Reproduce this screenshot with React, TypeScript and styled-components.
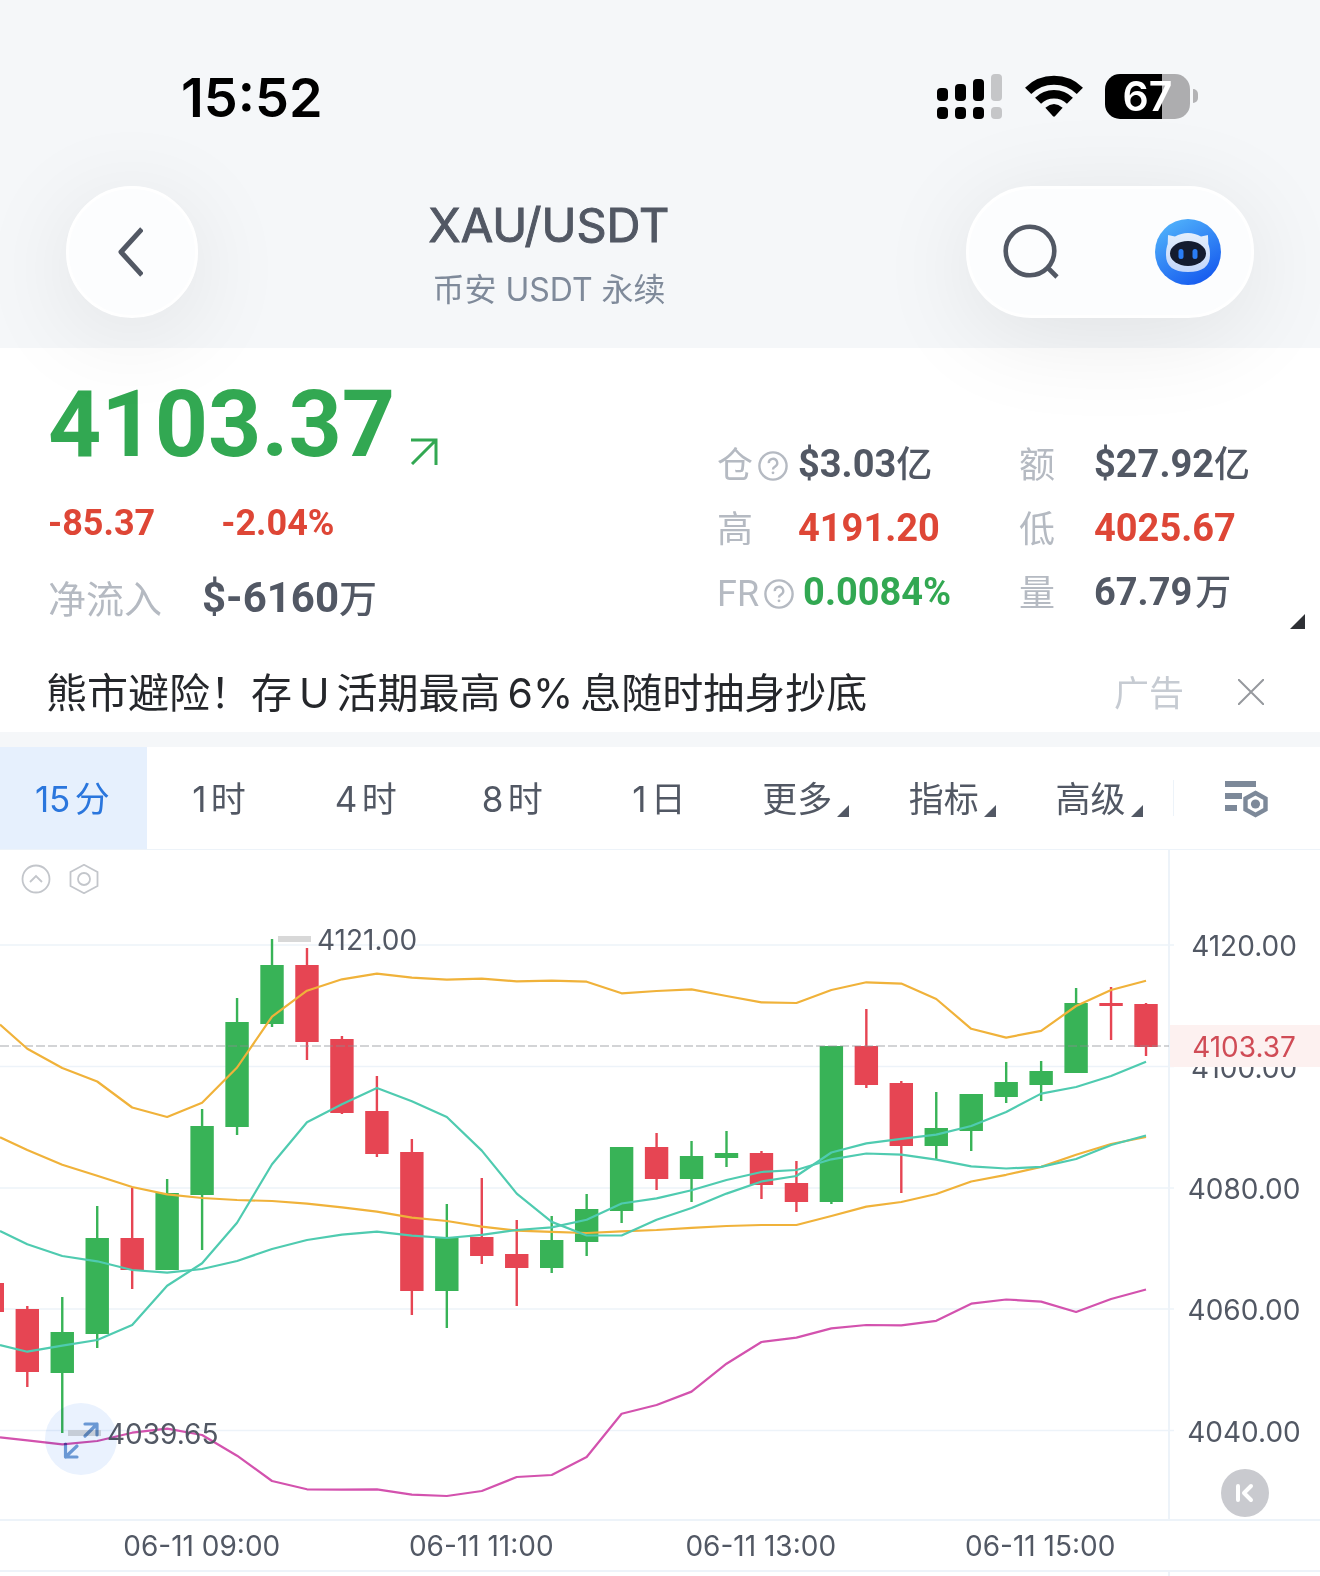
import React from "react";
import styled, { createGlobalStyle } from "styled-components";

const sans = `Inter, "Noto Sans CJK SC", sans-serif`;
const numeric = `Roboto, "Noto Sans CJK SC", sans-serif`;

const color = {
  ink: "#525864",
  muted: "#b5bac2",
  up: "#32a852",
  down: "#de4636",
  band: "#f5f7f9",
  line: "#edf3f9",
  candleUp: "#38b357",
  candleDown: "#e64553",
};

const GlobalStyle = createGlobalStyle`
  * { box-sizing: border-box; }
  body { margin: 0; background: #fff; font-family: ${sans}; color: ${color.ink}; }
  button { border: 0; padding: 0; background: none; font: inherit; color: inherit; cursor: pointer; }
  svg { display: block; }
  h1, p, dl, dd, dt { margin: 0; font-weight: inherit; }
`;

const Page = styled.main`
  width: 100%;
  overflow-x: hidden;
`;

/* ---------- header ---------- */

const Header = styled.header`
  position: relative;
  z-index: 1;
  background: ${color.band};
  padding: 66px 66px 30px;
`;

const StatusBar = styled.div`
  display: flex;
  align-items: center;
  justify-content: space-between;
  height: 62px;
  padding: 0 56px 0 115px;
  color: #000;
`;

const Clock = styled.time`
  padding-top: 2px;
  font-size: 54px;
  font-weight: 600;
  line-height: 62px;
`;

const StatusIcons = styled.div`
  display: flex;
  align-items: center;
  gap: 22px;
  padding-bottom: 2px;
`;

const BatteryWrap = styled.div`
  display: flex;
  align-items: center;
  gap: 3px;
`;

const BatteryBody = styled.div`
  width: 85px;
  height: 45px;
  border-radius: 15px;
  background: linear-gradient(to right, #000 67%, #adadaf 67%);
  color: #fff;
  font-size: 41px;
  font-weight: 600;
  line-height: 45px;
  text-align: center;
`;

const BatteryCap = styled.div`
  width: 5px;
  height: 14px;
  border-radius: 0 5px 5px 0;
  background: #b3b3b5;
`;

const TitleBar = styled.div`
  display: flex;
  align-items: center;
  justify-content: space-between;
  margin-top: 58px;
`;

const glass = `
  height: 132px;
  border-radius: 66px;
  border: 3px solid #fff;
  background: #fcfdfe;
  box-shadow: 0 16px 100px rgba(0, 0, 0, 0.09);
`;

const BackButton = styled.button`
  ${glass}
  width: 132px;
  display: grid;
  place-items: center;
  padding-right: 4px;
`;

const Actions = styled.div`
  ${glass}
  width: 288px;
  display: flex;
  align-items: center;
  justify-content: space-between;
  padding: 0 30px 0 34px;
`;

const TitleBlock = styled.div`
  flex: 1;
  display: flex;
  flex-direction: column;
  align-items: center;
  padding-right: 66px;
`;

const Pair = styled.h1`
  font-size: 47px;
  font-weight: 400;
  line-height: 60px;
  -webkit-text-stroke: 1px currentColor;
`;

const Venue = styled.p`
  margin-top: 15px;
  font-size: 32px;
  line-height: 40px;
  color: #7f8a9a;
`;

/* ---------- quote ---------- */

const Quote = styled.section`
  position: relative;
  display: flex;
  justify-content: space-between;
  height: 304px;
  padding-left: 48px;
  font-family: ${numeric};
`;

const Headline = styled.div`
  padding-top: 37px;
`;

const PriceRow = styled.div`
  display: flex;
  align-items: flex-end;
  gap: 15px;
  color: ${color.up};
`;

const Price = styled.p`
  font-size: 93px;
  font-weight: 700;
  line-height: 80px;
`;

const ChangeRow = styled.div`
  display: flex;
  gap: 66px;
  margin-top: 38px;
  font-size: 36px;
  font-weight: 700;
  line-height: 40px;
  color: ${color.down};
`;

const FlowRow = styled.div`
  display: flex;
  align-items: center;
  gap: 40px;
  margin-top: 30px;
  line-height: 48px;
`;

const FlowLabel = styled.span`
  padding-top: 3px;
  font-size: 38px;
  color: ${color.muted};
`;

const FlowValue = styled.span`
  font-size: 42px;
  font-weight: 700;
`;

const Unit = styled.span`
  font-weight: 500;
`;

const FlowUnit = styled(Unit)`
  font-size: 38px;
`;

const Stats = styled.dl`
  display: grid;
  grid-template-columns: 302px 301px;
  grid-auto-rows: 64px;
  padding-top: 84px;
`;

const Stat = styled.div`
  display: flex;
  align-items: center;
`;

const StatLabel = styled.dt<{ $width: number }>`
  display: flex;
  align-items: center;
  gap: 5px;
  flex: none;
  min-width: ${(p) => p.$width}px;
  padding: 4px 9px 0 0;
  font-size: 36px;
  line-height: 40px;
  color: ${color.muted};
`;

const StatValue = styled.dd<{ $tone: string; $spaced?: boolean }>`
  font-size: 38px;
  font-weight: 700;
  line-height: 44px;
  white-space: nowrap;
  color: ${(p) => p.$tone};

  ${Unit} {
    font-size: 36px;
    margin-left: ${(p) => (p.$spaced ? 3 : 0)}px;
  }
`;

const ExpandQuote = styled.button`
  position: absolute;
  right: 15px;
  bottom: 23px;
`;

/* ---------- ad ---------- */

const AdBar = styled.aside`
  display: flex;
  align-items: center;
  height: 80px;
  padding: 0 56px 0 46px;
`;

const AdLink = styled.a`
  flex: 1;
  padding-top: 2px;
  font-size: 41px;
  line-height: 48px;
  color: #25272b;
  text-decoration: none;
`;

const Latin = styled.span`
  padding: 0 7px;
`;

const AdTag = styled.span`
  margin-right: 54px;
  padding-top: 2px;
  font-size: 35px;
  line-height: 40px;
  color: #c6cbd2;
`;

/* ---------- tabs ---------- */

const Tabs = styled.nav`
  display: grid;
  grid-template-columns: repeat(9, 1fr);
  height: 118px;
  border-top: 15px solid ${color.band};
  border-bottom: 1px solid ${color.line};
`;

const Tab = styled.button<{ $active?: boolean }>`
  display: flex;
  align-items: center;
  justify-content: center;
  gap: 5px;
  padding: 2px 2px 0 0;
  font-size: 35px;
  line-height: 48px;
  white-space: nowrap;
  text-autospace: normal;
  color: ${(p) => (p.$active ? "#2a76dd" : color.ink)};
  background: ${(p) => (p.$active ? "#e6f0fd" : "transparent")};

  svg {
    margin-top: 24px;
  }
`;

const SettingsCell = styled.div`
  display: flex;
  align-items: center;
  justify-content: space-between;
  padding-right: 52px;

  &::before {
    content: "";
    width: 1px;
    height: 36px;
    background: ${color.line};
  }
`;

/* ---------- chart ---------- */

const ChartPane = styled.section`
  position: relative;
  border-bottom: 2px solid ${color.line};
`;

const Plot = styled.svg`
  width: 100%;
  height: auto;
  font-family: ${sans};
  font-size: 28px;
`;

const PaneTools = styled.div`
  position: absolute;
  left: 21px;
  top: 14px;
  display: flex;
  gap: 18px;
`;

const FullscreenButton = styled.button`
  position: absolute;
  left: 45px;
  bottom: 44px;
  width: 72px;
  height: 72px;
  border-radius: 50%;
  background: #eaf2fe;
  mix-blend-mode: multiply;
`;

const LatestButton = styled.button`
  position: absolute;
  right: 51px;
  bottom: 2px;
  width: 48px;
  height: 48px;
  border-radius: 50%;
  background: #c9cacf;
`;

const TimeAxis = styled.div`
  display: grid;
  grid-template-columns: repeat(4, 1fr);
  padding: 1px 140px 0 62px;
  border-bottom: 2px solid ${color.line};
  font-size: 28px;
  line-height: 48px;
  text-align: center;
`;

const NextPane = styled.div`
  height: 5px;
  margin-right: 150px;
  border-right: 2px solid ${color.line};
`;

/* ---------- data ---------- */

const START = 27.3;
const STEP = 34.96;
const TOP = 850;
const px = (i: number) => START + STEP * i;

type Candle = [up: 0 | 1, high: number, bodyTop: number, bodyBottom: number, low: number];

const candles: Candle[] = [
  [0, 1306, 1309, 1372, 1387], [1, 1297, 1332, 1373, 1433], [1, 1206, 1238, 1334, 1348],
  [0, 1188, 1238, 1270, 1289], [1, 1179, 1193, 1270, 1270], [1, 1109, 1126, 1195, 1250],
  [1, 998, 1022, 1127, 1135], [1, 939, 965, 1024, 1027], [0, 948, 965, 1042, 1060],
  [0, 1036, 1039, 1113, 1114], [0, 1076, 1111, 1154, 1157], [0, 1139, 1152, 1291, 1315],
  [1, 1204, 1238, 1291, 1328], [0, 1178, 1237, 1256, 1264], [0, 1220, 1254, 1268, 1306],
  [1, 1216, 1240, 1268, 1273], [1, 1194, 1209, 1242, 1256], [1, 1147, 1147, 1211, 1223],
  [0, 1133, 1147, 1179, 1190], [1, 1141, 1156, 1179, 1202], [1, 1131, 1153, 1158, 1167],
  [0, 1151, 1153, 1185, 1199], [0, 1161, 1183, 1202, 1212], [1, 1046, 1046, 1202, 1204],
  [0, 1009, 1046, 1085, 1088], [0, 1081, 1083, 1146, 1193], [1, 1092, 1128, 1146, 1159],
  [1, 1094, 1094, 1131, 1151], [1, 1062, 1082, 1097, 1103], [1, 1061, 1071, 1085, 1101],
  [1, 988, 1003, 1073, 1073], [0, 987, 1003, 1006, 1040], [0, 1003, 1004, 1047, 1056],
];

// First value is where the curve meets the left edge, the rest follow the candles.
const curves: { stroke: string; values: number[] }[] = [
  {
    stroke: "#f0b23a",
    values: [1024.5, 1048.7, 1068, 1081.5, 1107.5, 1117, 1102.7, 1067.5, 1016.7, 990.7, 979.3, 973.7, 977.7, 979.7, 978.7, 981.3, 980.7, 981.7, 993.3, 991, 989.3, 996, 1002.3, 1003, 990, 982.3, 983.6, 999, 1028.8, 1037.6, 1030.9, 1006, 990, 980.7],
  },
  {
    stroke: "#f0b23a",
    values: [1137.3, 1150, 1164.7, 1175.7, 1187, 1194.3, 1198, 1200, 1201, 1203.7, 1207.3, 1211.7, 1217.7, 1221, 1226.7, 1230.7, 1231.8, 1233, 1231.4, 1230, 1227.8, 1226, 1225, 1225, 1216, 1206.6, 1202, 1194, 1181.5, 1174.8, 1166.9, 1154.7, 1144, 1137],
  },
  {
    stroke: "#4fcbb0",
    values: [1345, 1351.7, 1345.7, 1340, 1325, 1285.7, 1263.3, 1222.7, 1164.3, 1122.3, 1104.3, 1088, 1101.3, 1117, 1150.6, 1193.6, 1221.9, 1235.5, 1235.5, 1219.7, 1208, 1193.6, 1181.5, 1176, 1152.5, 1143.4, 1138.8, 1134.6, 1126, 1112, 1093.6, 1087, 1076, 1061.8],
  },
  {
    stroke: "#4fcbb0",
    values: [1231, 1244.3, 1256, 1261.3, 1270, 1272.7, 1269, 1261, 1249, 1240, 1234.7, 1231.7, 1235.7, 1238, 1234.8, 1230, 1227.4, 1219.7, 1203.5, 1198.4, 1190.3, 1180, 1172, 1170, 1159.3, 1153.5, 1154.7, 1159.7, 1166.4, 1168.5, 1166.9, 1159, 1145, 1135.5],
  },
  {
    stroke: "#d352ae",
    values: [1437.3, 1440.3, 1444.3, 1441, 1432.7, 1428.7, 1435, 1455.7, 1481, 1489.3, 1489.7, 1489.3, 1494.7, 1496, 1491, 1477, 1475, 1457, 1413.7, 1405, 1391.6, 1363.7, 1342, 1337.6, 1328.4, 1325, 1325.4, 1320.8, 1303.7, 1299.5, 1301.6, 1312, 1299, 1289.5],
  },
];

const gridLevels = [
  { y: 945, label: "4120.00" },
  { y: 1066.500, label: "4100.00" },
  { y: 1188, label: "4080.00" },
  { y: 1309, label: "4060.00" },
  { y: 1430.500, label: "4040.00" },
];

/* ---------- icons ---------- */

const Signal = () => (
  <svg width="66" height="45" viewBox="0 0 66 45" aria-label="signal">
    {[14, 10, 5, 0].map((y, i) => (
      <g key={i} fill={i === 3 ? "#c5c6c8" : "#000"}>
        <rect x={i * 18} y={y} width="11" height={27 - y} rx="4" />
        <rect x={i * 18} y="33" width="11" height="12" rx="4" />
      </g>
    ))}
  </svg>
);

const Wifi = () => (
  <svg width="58" height="43" viewBox="-29.5 -42 59 43" aria-label="wi-fi">
    <g fill="none" stroke="#000">
      <path d="M-26.3 -26.3A37.6 37.6 0 0 1 26.3 -26.3" strokeWidth="9" />
      <path d="M-16.2 -16.2A23 23 0 0 1 16.2 -16.2" strokeWidth="8.6" />
    </g>
    <path d="M-8.8 -9Q0 -16.5 8.8 -9L1 -0.4Q0 0.6 -1 -0.4Z" />
  </svg>
);

const Robot = () => (
  <svg width="66" height="66" viewBox="0 0 66 66">
    <defs>
      <linearGradient id="robotBg" x1="0.2" y1="0" x2="0.8" y2="1">
        <stop offset="0" stopColor="#51b3fb" />
        <stop offset="1" stopColor="#1356ee" />
      </linearGradient>
      <linearGradient id="robotHead" x1="0" y1="0" x2="0" y2="1">
        <stop offset="0" stopColor="#e3eefc" />
        <stop offset="1" stopColor="#c3d6fa" />
      </linearGradient>
    </defs>
    <circle cx="33" cy="33" r="33" fill="url(#robotBg)" />
    <path
      d="M13 16.5Q13 15.8 14 16.2L20 17.6Q26 14 33 14T46 17.6L52 16.2Q53 15.8 53 16.5L53.3 25Q55 29 55 36Q55 53 33 53T11 36Q11 29 12.700 25Z"
      fill="url(#robotHead)"
    />
    <ellipse cx="33" cy="34.500" rx="18" ry="12.500" fill="#141c30" />
    <rect x="23.500" y="30" width="5" height="10" rx="2.500" fill="#2a7df5" />
    <rect x="37.500" y="30" width="5" height="10" rx="2.500" fill="#2a7df5" />
  </svg>
);

const Help = () => (
  <svg width="30" height="30" viewBox="0 0 30 30" fill="none" stroke={color.muted} strokeWidth="2.400">
    <circle cx="15" cy="15" r="13.600" />
    <path d="M10.800 12.200A4.200 4.200 0 1 1 17 15.600Q15 16.600 15 18.400" />
    <circle cx="15" cy="21.800" r="0.800" fill={color.muted} strokeWidth="1.200" />
  </svg>
);

const Corner = ({ size, fill }: { size: number; fill: string }) => (
  <svg width={size} height={size} viewBox="0 0 10 10">
    <path d="M10 0V10H0Z" fill={fill} />
  </svg>
);

/* ---------- view ---------- */

const stats = [
  { label: "仓", help: true, value: "$3.03", unit: "亿", tone: color.ink },
  { label: "额", value: "$27.92", unit: "亿", tone: color.ink },
  { label: "高", value: "4191.20", tone: color.down },
  { label: "低", value: "4025.67", tone: color.down },
  { label: "FR", help: true, value: "0.0084%", tone: color.up },
  { label: "量", value: "67.79", unit: "万", tone: color.ink, spaced: true },
];

const intervals = ["15分", "1时", "4时", "8时", "1日"];
const menus = ["更多", "指标", "高级"];
const times = ["06-11 09:00", "06-11 11:00", "06-11 13:00", "06-11 15:00"];

const CandleChart = () => (
  <Plot viewBox={`0 ${TOP} 1320 669`} role="img" aria-label="XAU/USDT 15分">
    {gridLevels.map((g) => (
      <line key={g.y} x1="0" x2="1174" y1={g.y} y2={g.y} stroke={color.line} strokeWidth="1.600" />
    ))}
    <line x1="1169" x2="1169" y1={TOP} y2="1519" stroke={color.line} strokeWidth="2" />

    <rect x="0" y="1283" width="4" height="29" fill={color.candleDown} />
    {candles.map(([up, high, top, bottom, low], i) => (
      <g key={i} fill={up ? color.candleUp : color.candleDown}>
        <rect x={px(i) - 1.2} y={high} width="2.400" height={low - high} />
        <rect x={px(i) - 11.7} y={top} width="23.400" height={bottom - top} />
      </g>
    ))}
    <line x1="0" x2="1169" y1="1046" y2="1046" stroke="#8a8d94" strokeOpacity="0.5" strokeWidth="1.600" strokeDasharray="9 3" />
    {curves.map((c, n) => (
      <polyline
        key={n}
        fill="none"
        stroke={c.stroke}
        strokeWidth="2.200"
        strokeLinejoin="round"
        points={c.values.map((y, i) => `${i === 0 ? 0 : px(i - 1)},${y}`).join(" ")}
      />
    ))}

    <rect x="278" y="936" width="33" height="6" fill="#d8d8d8" />
    <text x="317" y="950" fill={color.ink}>4121.00</text>
    <rect x="68" y="1430" width="33" height="6" fill="#d8d8d8" />
    <text x="107" y="1444" fill={color.ink}>4039.65</text>

    {gridLevels.map((g) => (
      <text key={g.label} x="1244" y={g.y + 11} textAnchor="middle" fill={color.ink}>
        {g.label}
      </text>
    ))}
    <rect x="1170" y="1025" width="150" height="42" fill="#fdf1f0" />
    <text x="1244" y="1057" textAnchor="middle" fill="#d04c56">4103.37</text>
  </Plot>
);

export default function App() {
  return (
    <Page>
      <GlobalStyle />
      <Header>
        <StatusBar>
          <Clock>15:52</Clock>
          <StatusIcons>
            <Signal />
            <Wifi />
            <BatteryWrap>
              <BatteryBody>67</BatteryBody>
              <BatteryCap />
            </BatteryWrap>
          </StatusIcons>
        </StatusBar>
        <TitleBar>
          <BackButton aria-label="返回">
            <svg width="26" height="50" viewBox="0 0 26 50" fill="none" stroke={color.ink} strokeWidth="5" strokeLinejoin="round">
              <path d="M25 2L4 25L25 48" />
            </svg>
          </BackButton>
          <TitleBlock>
            <Pair>XAU/USDT</Pair>
            <Venue>币安 USDT 永续</Venue>
          </TitleBlock>
          <Actions>
            <button aria-label="搜索">
              <svg width="56" height="56" viewBox="0 0 56 56" fill="none" stroke={color.ink} strokeWidth="4.600">
                <circle cx="27" cy="27" r="24.300" />
                <path d="M44 43L54 53" />
              </svg>
            </button>
            <button aria-label="助手">
              <Robot />
            </button>
          </Actions>
        </TitleBar>
      </Header>

      <Quote>
        <Headline>
          <PriceRow>
            <Price>4103.37</Price>
            <svg width="28" height="28" viewBox="0 0 28 28" fill="none" stroke={color.up} strokeWidth="3">
              <path d="M1 3H26V28M26 3L2 27" />
            </svg>
          </PriceRow>
          <ChangeRow>
            <span>-85.37</span>
            <span>-2.04%</span>
          </ChangeRow>
          <FlowRow>
            <FlowLabel>净流入</FlowLabel>
            <FlowValue>
              $-6160<FlowUnit>万</FlowUnit>
            </FlowValue>
          </FlowRow>
        </Headline>
        <Stats>
          {stats.map((s, i) => (
            <Stat key={s.label}>
              <StatLabel $width={i % 2 ? 75 : 81}>
                {s.label}
                {s.help && <Help />}
              </StatLabel>
              <StatValue $tone={s.tone} $spaced={s.spaced}>
                {s.value}
                {s.unit && <Unit>{s.unit}</Unit>}
              </StatValue>
            </Stat>
          ))}
        </Stats>
        <ExpandQuote aria-label="展开">
          <Corner size={15} fill="#2e3035" />
        </ExpandQuote>
      </Quote>

      <AdBar>
        <AdLink href="#">
          熊市避险！存<Latin>U</Latin>活期最高<Latin>6%</Latin>息随时抽身抄底
        </AdLink>
        <AdTag>广告</AdTag>
        <button aria-label="关闭">
          <svg width="26" height="26" viewBox="0 0 26 26" stroke="#96999e" strokeWidth="2">
            <path d="M0 0L26 26M26 0L0 26" />
          </svg>
        </button>
      </AdBar>

      <Tabs>
        {intervals.map((t, i) => (
          <Tab key={t} $active={i === 0}>
            {t}
          </Tab>
        ))}
        {menus.map((t) => (
          <Tab key={t}>
            {t}
            <Corner size={12} fill={color.ink} />
          </Tab>
        ))}
        <SettingsCell>
          <button aria-label="图表设置">
            <svg width="43" height="40" viewBox="0 0 43 40">
              <g fill="#7d8999">
                <rect x="0" y="3" width="31" height="6" />
                <rect x="0" y="15" width="17" height="6" />
                <rect x="0" y="27" width="12" height="6" />
              </g>
              <path d="M30.500 15L40.500 20.500V31.500L30.500 37L20.500 31.500V20.500Z" fill="none" stroke="#7d8999" strokeWidth="4.400" />
              <circle cx="30.500" cy="26" r="4.600" fill="#7d8999" />
            </svg>
          </button>
        </SettingsCell>
      </Tabs>

      <ChartPane>
        <CandleChart />
        <PaneTools>
          <button aria-label="收起">
            <svg width="30" height="30" viewBox="0 0 30 30" fill="none" stroke="#c3c6cb" strokeWidth="1.800">
              <circle cx="15" cy="15" r="13.500" />
              <path d="M9 18L15 12L21 18" />
            </svg>
          </button>
          <button aria-label="指标设置">
            <svg width="30" height="30" viewBox="0 0 30 30" fill="none" stroke="#c3c6cb" strokeWidth="1.800">
              <path d="M15 0.800L28.500 8V22L15 29.200L1.500 22V8Z" />
              <circle cx="15" cy="15" r="6" />
            </svg>
          </button>
        </PaneTools>
        <FullscreenButton aria-label="全屏">
          <svg width="72" height="72" viewBox="0 0 72 72" fill="none" stroke="#6a98d4" strokeWidth="3.200" strokeLinecap="round" strokeLinejoin="round">
            <path d="M40 21H52V32M52 21L40 33" />
            <path d="M20.500 41V54H32M20.500 54L32 43" />
          </svg>
        </FullscreenButton>
        <LatestButton aria-label="最新">
          <svg width="48" height="48" viewBox="0 0 48 48" fill="none" stroke="#fff" strokeWidth="4" strokeLinecap="round" strokeLinejoin="round">
            <path d="M17 17V31M30 17L23 24L30 31" />
          </svg>
        </LatestButton>
      </ChartPane>

      <TimeAxis>
        {times.map((t) => (
          <time key={t}>{t}</time>
        ))}
      </TimeAxis>
      <NextPane />
    </Page>
  );
}
